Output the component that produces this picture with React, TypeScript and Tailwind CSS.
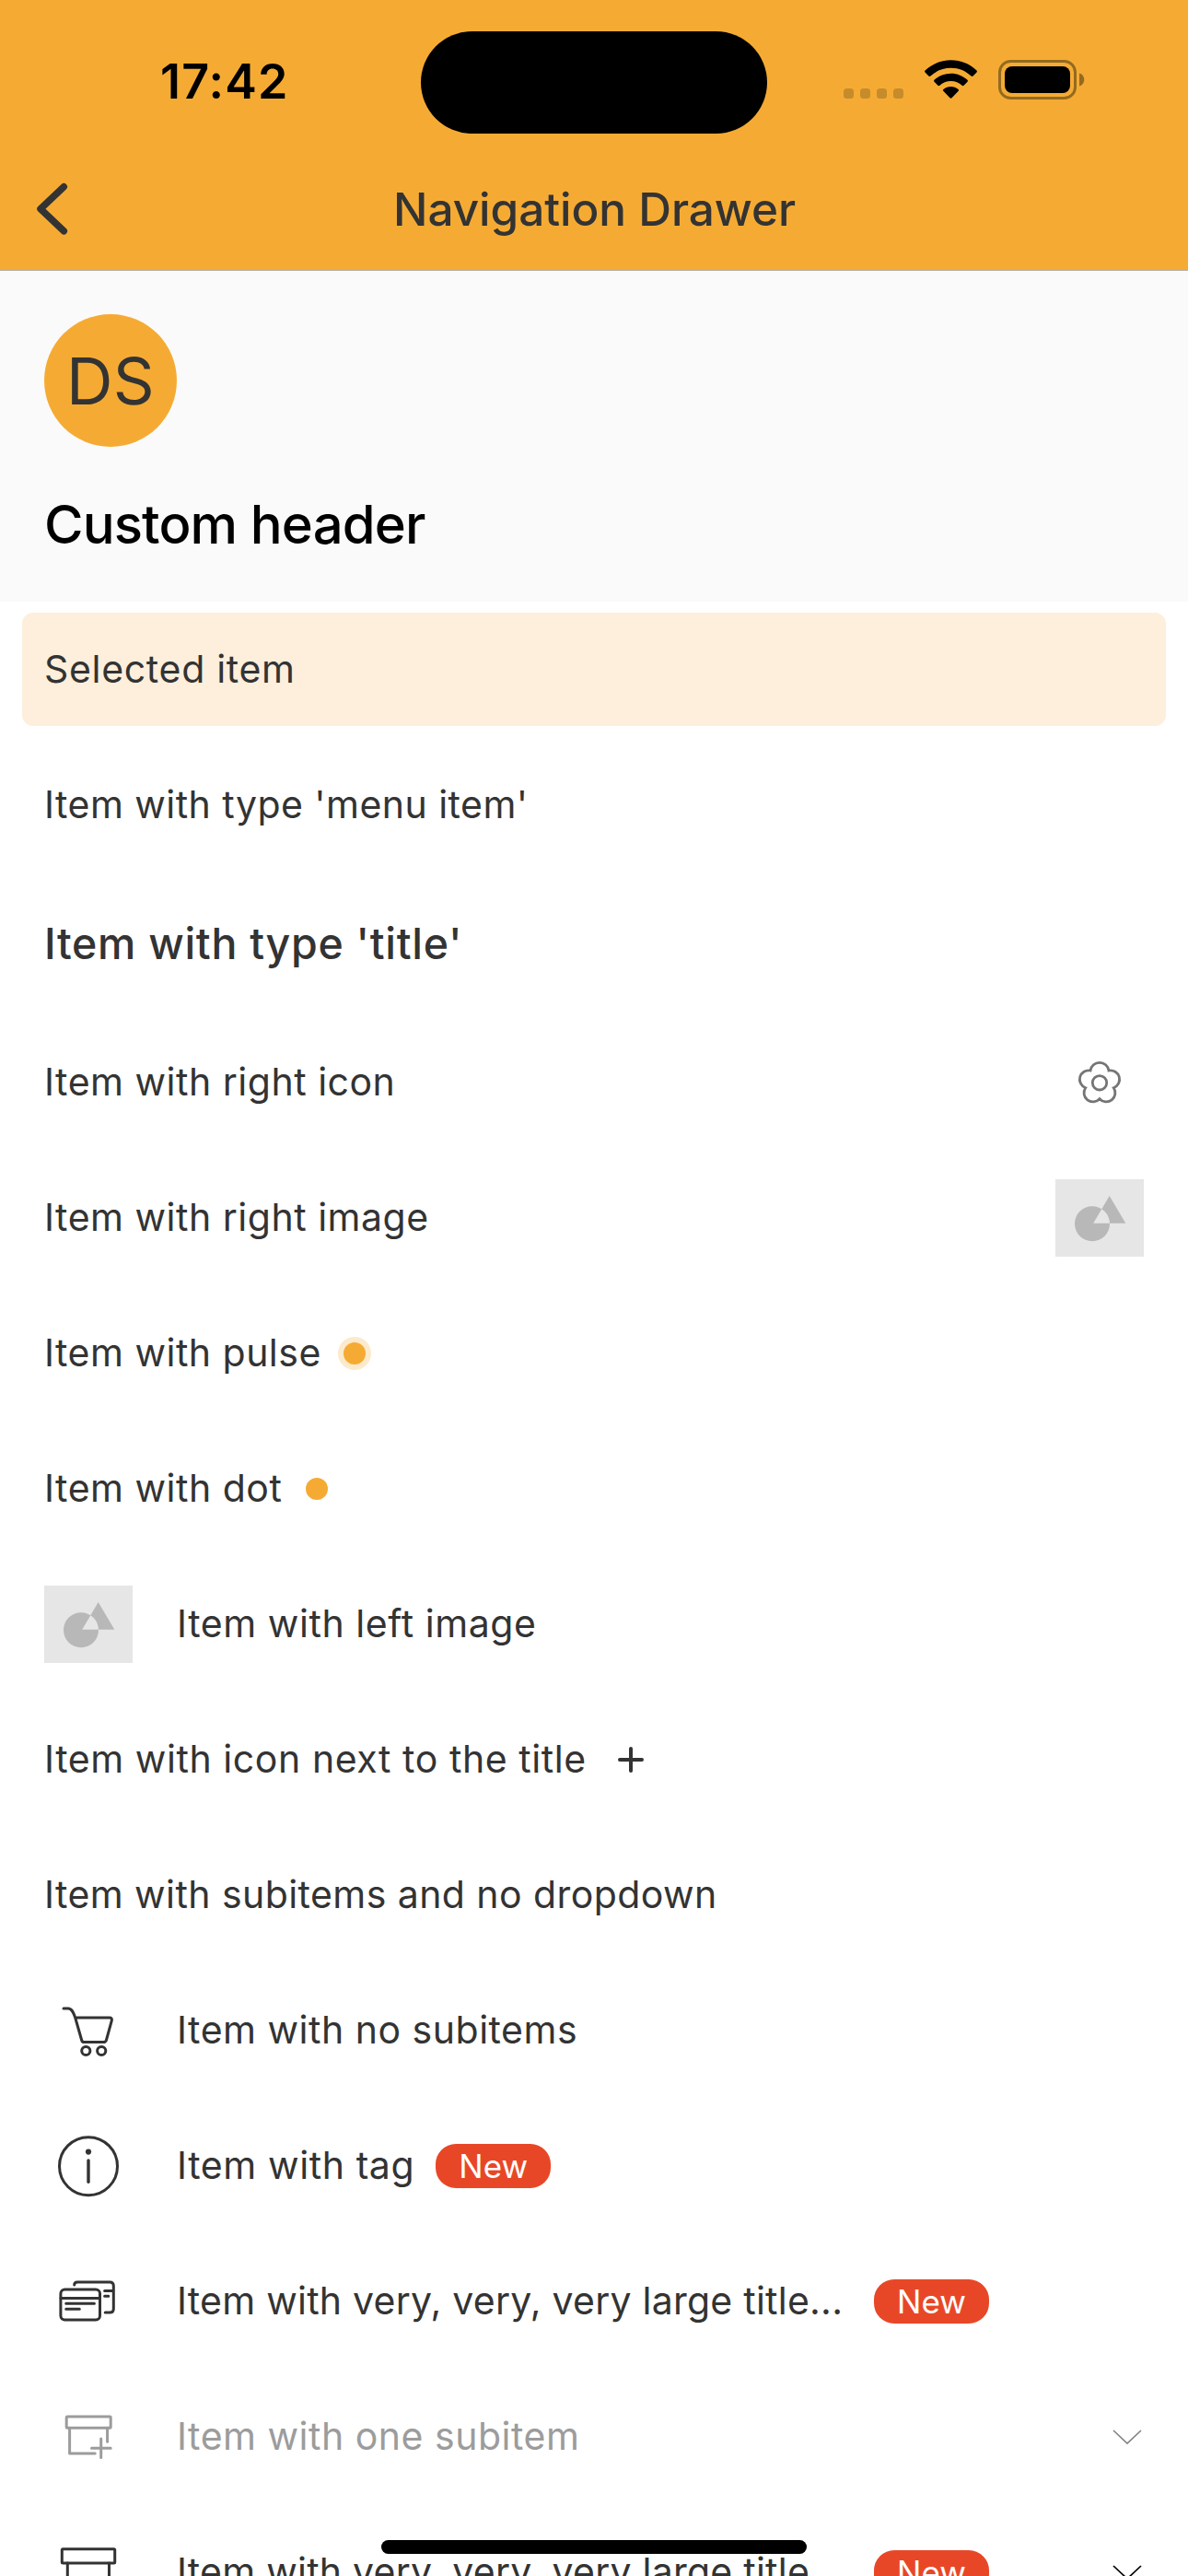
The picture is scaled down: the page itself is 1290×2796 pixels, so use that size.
import type { ReactNode } from "react";

function BackIcon() {
  return (
    <svg viewBox="0 0 96 96" className="h-24 w-24" fill="none" stroke="#333333" strokeWidth="7.5" strokeLinecap="round" strokeLinejoin="round">
      <path d="M61.3 23.8 L36 47.8 L61.3 71.8" />
    </svg>
  );
}

function WifiIcon() {
  return (
    <svg viewBox="0 0 57 42" className="mt-[65px] h-[42px] w-[57px]" fill="#000">
      <path d="M28.5 0.3 C39.4 0.3 49.3 4.5 56.5 11.6 C57.1 12.2 57.1 13 56.5 13.6 L52.6 17.6 C52 18.2 51.2 18.2 50.6 17.6 C44.9 12 37.1 8.7 28.5 8.7 C19.9 8.7 12.1 12 6.4 17.6 C5.8 18.2 5 18.2 4.4 17.6 L0.5 13.6 C-0.1 13 -0.1 12.2 0.5 11.6 C7.7 4.5 17.6 0.3 28.5 0.3 Z" />
      <path d="M28.5 14.7 C35.5 14.7 41.8 17.4 46.5 21.8 C47.1 22.4 47.1 23.2 46.5 23.8 L42.6 27.7 C42 28.3 41.2 28.3 40.6 27.8 C37.4 24.9 33.2 23 28.5 23 C23.8 23 19.6 24.9 16.4 27.8 C15.8 28.3 15 28.3 14.4 27.7 L10.5 23.8 C9.9 23.2 9.9 22.4 10.5 21.8 C15.2 17.4 21.5 14.7 28.5 14.7 Z" />
      <path d="M28.5 29 C31.6 29 34.4 30.1 36.6 32 C37.2 32.5 37.2 33.3 36.7 33.8 L29.5 41.3 C28.9 41.9 28.1 41.9 27.5 41.3 L20.3 33.8 C19.8 33.3 19.8 32.5 20.4 32 C22.6 30.1 25.4 29 28.5 29 Z" />
    </svg>
  );
}

function BatteryIcon() {
  return (
    <svg viewBox="0 0 94 43" className="mt-[65px] h-[43px] w-[94px]">
      <rect x="1.5" y="1.5" width="82" height="40" rx="12" fill="none" stroke="#946a20" strokeWidth="3" />
      <rect x="7" y="7" width="71" height="29" rx="8" fill="#000" />
      <path d="M88 14.5 C91.5 15.6 93.3 18.3 93.3 21.5 C93.3 24.7 91.5 27.4 88 28.5 Z" fill="#946a20" />
    </svg>
  );
}

function FlowerIcon() {
  return (
    <svg viewBox="0 0 96 96" className="h-24 w-24" fill="none" stroke="#757575" strokeWidth="2.8">
      <path d="M38 35 A10.1 10.1 0 0 1 58 35 A9.75 9.75 0 0 1 63.3 53.7 A9.75 9.75 0 0 1 48 65.7 A9.75 9.75 0 0 1 32.7 53.7 A9.75 9.75 0 0 1 38 35 Z" />
      <circle cx="48" cy="48.3" r="7.7" />
    </svg>
  );
}

function ImagePlaceholder() {
  return (
    <svg viewBox="0 0 96 84" className="h-[84px] w-24 shrink-0 bg-[#e6e6e6]">
      <path
        d="M21 48.3 a19 19 0 1 0 38 0 a19 19 0 1 0 -38 0 Z M58.7 18 L76.3 47.8 L41.2 47.8 Z"
        fill="#b8b8b8"
        fillRule="evenodd"
      />
    </svg>
  );
}

function PlusIcon() {
  return (
    <svg viewBox="0 0 48 48" className="h-12 w-12" fill="none" stroke="#333333" strokeWidth="4" strokeLinecap="round">
      <path d="M24 12 V36 M12 24 H36" />
    </svg>
  );
}

function ItemIcon({ children, color = "#333333" }: { children: ReactNode; color?: string }) {
  return (
    <svg viewBox="0 0 96 96" className="h-24 w-24 shrink-0" fill="none" stroke={color} strokeWidth="3" strokeLinecap="round" strokeLinejoin="round">
      {children}
    </svg>
  );
}

function CartIcon() {
  return (
    <ItemIcon>
      <path d="M21 23.9 H26 C30 23.9 31.8 28.3 33.7 34 L40.7 58.5 Q41.3 60.6 43.5 60.6 H64.5 Q66.7 60.6 67.4 58.5 L73.3 37.2 Q74 34 71 34 H33.7" />
      <circle cx="45.3" cy="70" r="4.6" />
      <circle cx="62.2" cy="70" r="4.6" />
    </ItemIcon>
  );
}

function InfoIcon() {
  return (
    <ItemIcon>
      <circle cx="48" cy="48.2" r="31.5" />
      <path d="M48 42 V65.2" strokeWidth="3.4" />
      <circle cx="48" cy="32.6" r="3.1" fill="#333333" stroke="none" />
    </ItemIcon>
  );
}

function CardsIcon() {
  return (
    <ItemIcon>
      <rect x="17.9" y="35" width="42.6" height="33" rx="4.5" />
      <path d="M18 44.5 H60.5 M23.7 50.2 H54.4 M23.7 56.2 H38.3" />
      <path d="M32.7 30.1 Q32.7 27 36 27 H71.2 Q75.3 27 75.3 31.1 V55.9 Q75.3 59.9 71.2 59.9 H66.2 M65.6 36.5 H75.3 M65.6 42.2 H69.8" />
    </ItemIcon>
  );
}

function BoxPlusIcon() {
  return (
    <ItemIcon color="#9c9c9c">
      <rect x="24.2" y="26" width="48" height="12.2" rx="1" />
      <path d="M27.6 38.2 V66.1 H55.2 M68.6 38.2 V53.3 M61.7 50.1 V70.5 M51.5 60.2 H72.2" />
    </ItemIcon>
  );
}

function BoxIcon() {
  return (
    <ItemIcon>
      <rect x="19.3" y="22.8" width="57.4" height="15.1" rx="1" />
      <path d="M25.3 38 V76 H70.5 V38" />
    </ItemIcon>
  );
}

function Chevron({ color }: { color: string }) {
  return (
    <svg viewBox="0 0 36 24" className="h-6 w-9 shrink-0" fill="none" stroke={color} strokeWidth="1.7">
      <path d="M3 5 L18 19 L33 5" />
    </svg>
  );
}

function Tag() {
  return (
    <span className="flex h-12 w-[125px] shrink-0 items-center justify-center rounded-[22px] bg-[#e84727] pt-px text-[35px] leading-none tracking-[0.03px] text-white">
      New
    </span>
  );
}

function Dot() {
  return <span className="h-6 w-6 rounded-full bg-[#f5ab33]" />;
}

function Label({ children, className = "" }: { children: ReactNode; className?: string }) {
  return <span className={`pb-0.5 ${className}`}>{children}</span>;
}

function Row({ children }: { children: ReactNode }) {
  return <li className="flex h-[147px] shrink-0 items-center px-12">{children}</li>;
}

export default function App() {
  return (
    <div className="relative flex h-[2796px] w-[1290px] flex-col overflow-hidden bg-white font-['Inter',sans-serif] text-[#333333]">
      <header className="flex shrink-0 flex-col border-b border-[#b4b0aa] bg-[#f5ab33]">
        <div className="flex h-[161px] items-start">
          <div className="mt-[55px] w-[457px] pl-[174px] text-[52px] leading-[68px] font-semibold tracking-[1.17px] text-black">17:42</div>
          <div className="mt-[33.5px] h-[111px] w-[376px] rounded-full bg-black" />
          <div className="mt-24 ml-[83px] flex gap-[7px]">
            {[0, 1, 2, 3].map((i) => (
              <span key={i} className="h-[11px] w-[11px] rounded-[3.5px] bg-[#c68b2b]" />
            ))}
          </div>
          <div className="ml-[23px] flex gap-[23px]">
            <WifiIcon />
            <BatteryIcon />
          </div>
        </div>
        <div className="flex h-[132px] items-center">
          <div className="w-[427px] pl-2">
            <BackIcon />
          </div>
          <h1 className="text-[49.5px] leading-[66px] font-medium tracking-[-0.04px]">Navigation Drawer</h1>
        </div>
      </header>

      <section className="flex h-[359px] shrink-0 flex-col bg-[#fafafa] px-12 pt-[47px]">
        <div className="flex h-36 w-36 items-center justify-center rounded-full bg-[#f5ab33] pt-px text-[70px] leading-none tracking-[0.4px]">DS</div>
        <h2 className="mt-[42px] text-[58px] leading-[84px] font-medium tracking-[-0.86px] text-black">Custom header</h2>
      </section>

      <ul className="flex flex-col text-[41px] leading-[60px] tracking-[0.51px] whitespace-nowrap">
        <li className="flex h-[147px] shrink-0 px-6 py-3">
          <div className="flex flex-1 items-center rounded-xl bg-[#fdefdc] px-6">
            <Label className="tracking-[0.68px]">Selected item</Label>
          </div>
        </li>
        <Row>
          <Label className="tracking-[0.46px]">Item with type 'menu item'</Label>
        </Row>
        <li className="flex h-[154px] shrink-0 items-center px-12 text-[46.5px] font-medium tracking-[0.69px]">Item with type 'title'</li>
        <Row>
          <Label className="flex-1">Item with right icon</Label>
          <FlowerIcon />
        </Row>
        <Row>
          <Label className="flex-1">Item with right image</Label>
          <ImagePlaceholder />
        </Row>
        <Row>
          <Label className="tracking-[0.49px]">Item with pulse</Label>
          <span className="ml-[18px] flex h-9 w-9 items-center justify-center rounded-full bg-[#fceacc]">
            <Dot />
          </span>
        </Row>
        <Row>
          <Label className="mr-[26px]">Item with dot</Label>
          <Dot />
        </Row>
        <Row>
          <ImagePlaceholder />
          <Label className="ml-12 tracking-[0.57px]">Item with left image</Label>
        </Row>
        <Row>
          <Label className="mr-6 tracking-[0.57px]">Item with icon next to the title</Label>
          <PlusIcon />
        </Row>
        <Row>
          <Label className="tracking-[0.43px]">Item with subitems and no dropdown</Label>
        </Row>
        <Row>
          <CartIcon />
          <Label className="ml-12">Item with no subitems</Label>
        </Row>
        <Row>
          <InfoIcon />
          <Label className="mr-[23px] ml-12 tracking-[0.6px]">Item with tag</Label>
          <Tag />
        </Row>
        <Row>
          <CardsIcon />
          <Label className="ml-12 w-[757px] tracking-[0.24px]">Item with very, very, very large title...</Label>
          <Tag />
        </Row>
        <Row>
          <BoxPlusIcon />
          <Label className="ml-12 flex-1 text-[#9c9c9c]">Item with one subitem</Label>
          <Chevron color="#858585" />
        </Row>
        <Row>
          <BoxIcon />
          <Label className="ml-12 w-[757px] tracking-[0.24px]">Item with very, very, very large title...</Label>
          <Tag />
          <span className="ml-auto">
            <Chevron color="#000000" />
          </span>
        </Row>
      </ul>

      <div className="absolute top-[2757px] left-[414px] h-[15px] w-[462px] rounded-full bg-black" />
    </div>
  );
}
